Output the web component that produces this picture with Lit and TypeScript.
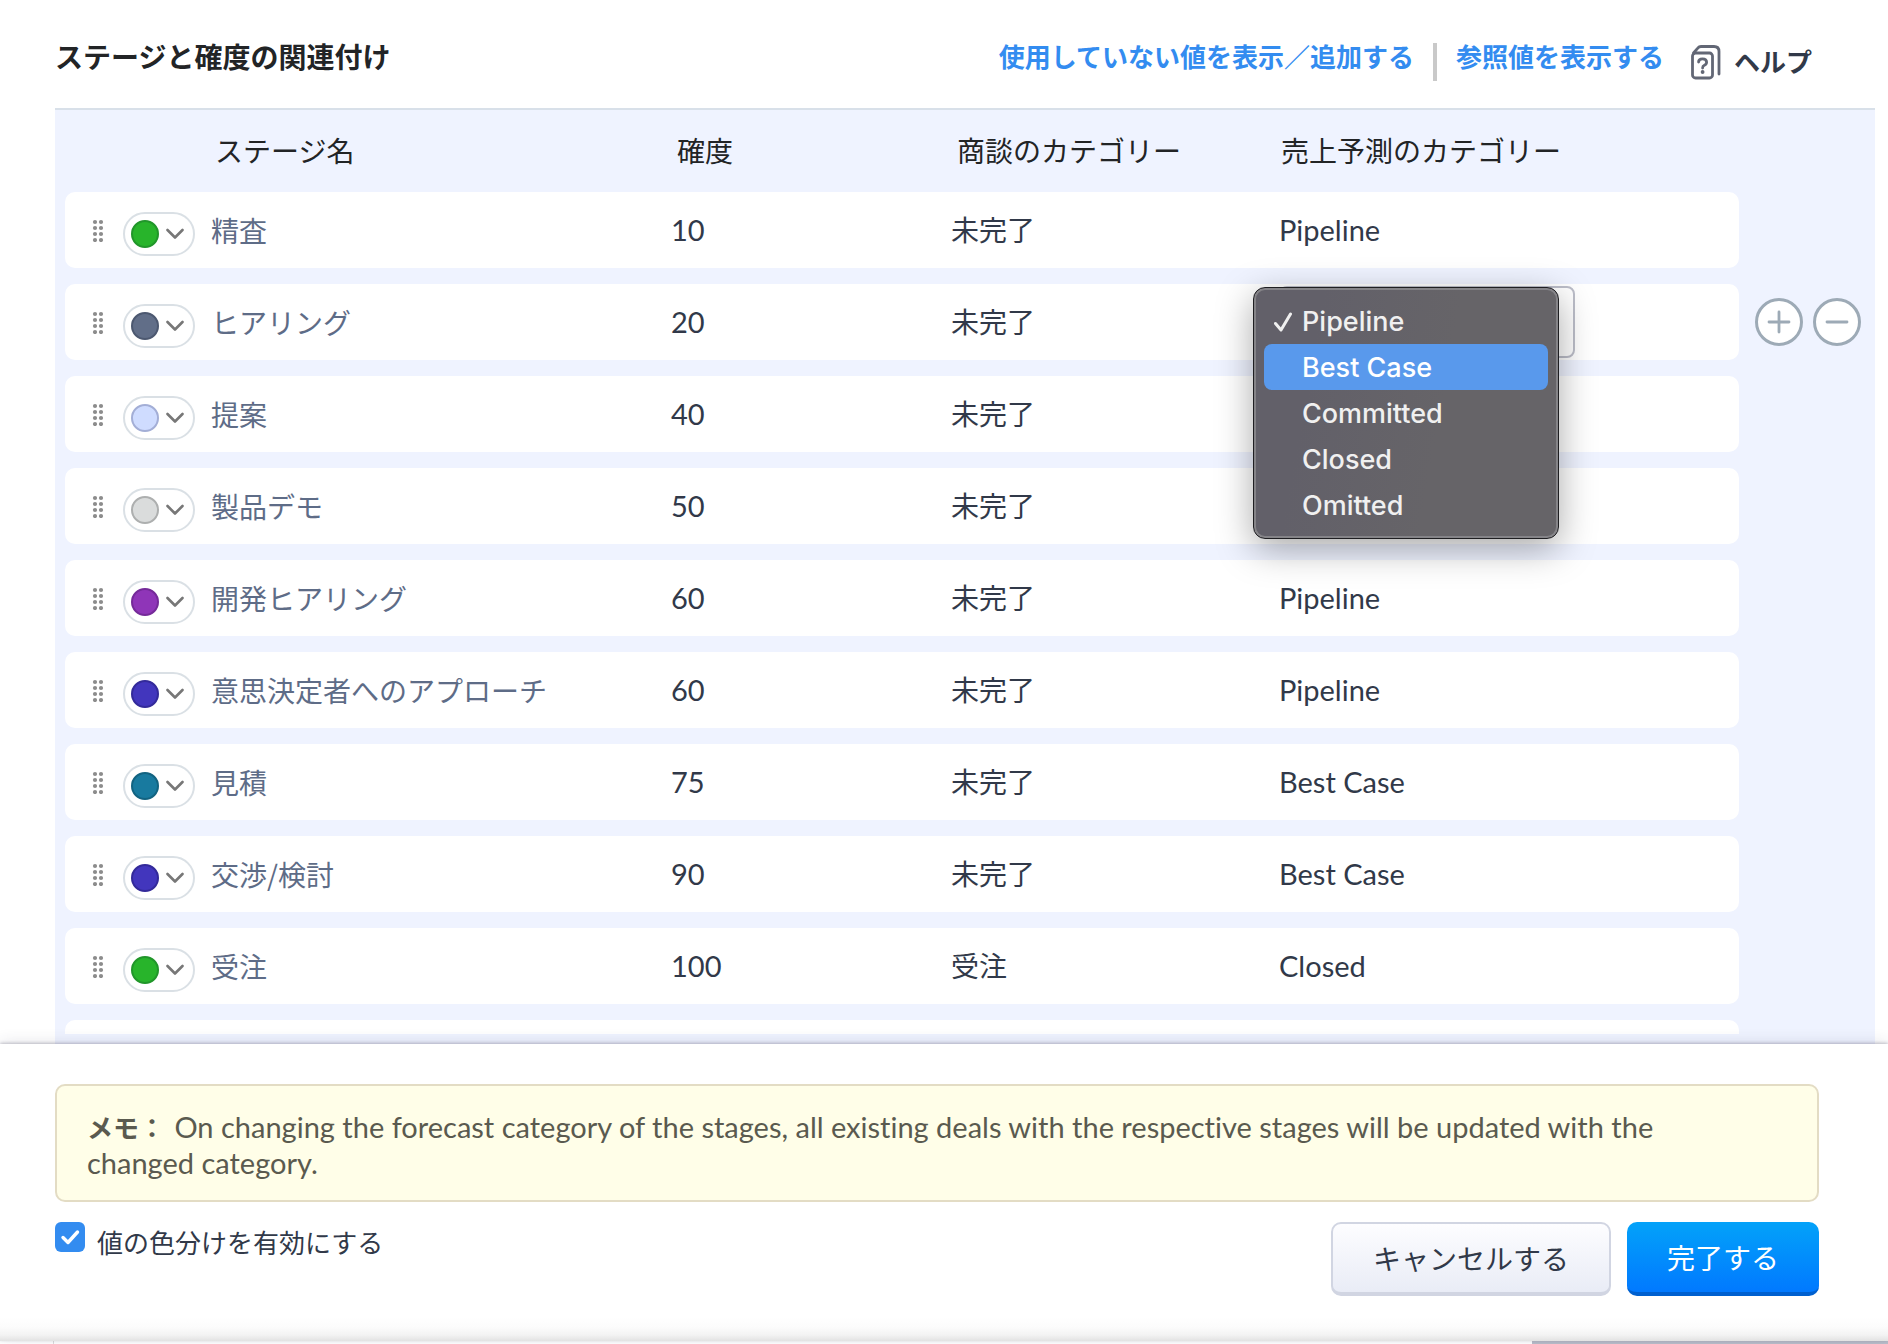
import { LitElement, html, css, svg, nothing } from "lit";
import { customElement, property, state } from "lit/decorators.js";
import { classMap } from "lit/directives/class-map.js";
import { styleMap } from "lit/directives/style-map.js";

interface Stage {
  name: string;
  probability: number;
  category: string;
  forecast: string;
  color: string;
  ring: string;
}

const STAGES: Stage[] = [
  { name: "精査", probability: 10, category: "未完了", forecast: "Pipeline", color: "#28b42b", ring: "#21962a" },
  { name: "ヒアリング", probability: 20, category: "未完了", forecast: "Pipeline", color: "#616e88", ring: "#4c5870" },
  { name: "提案", probability: 40, category: "未完了", forecast: "", color: "#cfdcff", ring: "#a3aed6" },
  { name: "製品デモ", probability: 50, category: "未完了", forecast: "", color: "#dadcdc", ring: "#adafaf" },
  { name: "開発ヒアリング", probability: 60, category: "未完了", forecast: "Pipeline", color: "#8f35b8", ring: "#752a99" },
  { name: "意思決定者へのアプローチ", probability: 60, category: "未完了", forecast: "Pipeline", color: "#4236bd", ring: "#332a9a" },
  { name: "見積", probability: 75, category: "未完了", forecast: "Best Case", color: "#187a9f", ring: "#126381" },
  { name: "交渉/検討", probability: 90, category: "未完了", forecast: "Best Case", color: "#4236bd", ring: "#332a9a" },
  { name: "受注", probability: 100, category: "受注", forecast: "Closed", color: "#28b42b", ring: "#21962a" },
];

const FORECASTS = ["Pipeline", "Best Case", "Committed", "Closed", "Omitted"];

@customElement("forecast-picker")
class ForecastPicker extends LitElement {
  @property() value = "Pipeline";
  @state() private active = "Best Case";

  static styles = css`
    :host {
      display: block;
    }
    .field {
      display: block;
      box-sizing: border-box;
      width: 296px;
      height: 72px;
      padding: 0 20px;
      border: 2px solid #bcbec9;
      border-radius: 8px;
      background: #fff;
      color: #313949;
      font: inherit;
      appearance: none;
    }
    .menu {
      position: absolute;
      z-index: 2;
      top: 3px;
      left: -26px;
      box-sizing: border-box;
      width: 306px;
      padding: 10px;
      border: 1px solid #1f1f22;
      border-radius: 12px;
      background: linear-gradient(100deg, #626069 20%, #666468 60%);
      box-shadow: inset 0 0 0 2px #858488, 0 10px 36px rgba(0, 0, 0, 0.34);
      color: #f0f0f0;
      font: 500 27px/46px Inter, "Liberation Sans", sans-serif;
    }
    .option {
      display: flex;
      align-items: center;
      box-sizing: border-box;
      height: 46px;
      padding: 2px 0 0 10px;
      border-radius: 8px;
    }
    .option.active {
      background: #5999ec;
      color: #fff;
    }
    .tick {
      width: 28px;
      height: 24px;
      flex: none;
    }
  `;

  render() {
    return html`
      <select class="field" aria-label="売上予測のカテゴリー" .value=${this.value}>
        ${FORECASTS.map((f) => html`<option ?selected=${f === this.value}>${f}</option>`)}
      </select>
      <div class="menu" role="listbox">
        ${FORECASTS.map(
          (f) => html`
            <div
              class=${classMap({ option: true, active: f === this.active })}
              role="option"
              aria-selected=${f === this.value}
              @mouseenter=${() => (this.active = f)}
            >
              <svg class="tick" viewBox="0 0 28 24" aria-hidden="true">
                ${f === this.value
                  ? svg`<path d="M1.5 13.5 L7 20 L16.5 4" fill="none" stroke="#f0f0f0" stroke-width="3" stroke-linecap="round" stroke-linejoin="round"/>`
                  : nothing}
              </svg>
              ${f}
            </div>
          `
        )}
      </div>
    `;
  }
}

@customElement("app-root")
class AppRoot extends LitElement {
  @state() private editing = 1;
  @state() private colorCoding = true;

  static styles = css`
    :host {
      display: block;
      color: #313949;
      background: #fff;
      font: 400 28px/36px Lato, "Noto Sans CJK JP", sans-serif;
      font-variant-ligatures: none;
    }
    .page {
      display: flex;
      flex-direction: column;
      height: 100vh;
    }
    .top {
      display: flex;
      align-items: center;
      flex: none;
      height: 108px;
      box-sizing: border-box;
      padding: 16px 76px 0 55px;
    }
    .title {
      margin: 0;
      padding-bottom: 10px;
      color: #222426;
      font-size: 28px;
      font-weight: 700;
      line-height: 36px;
    }
    .tools {
      display: flex;
      align-items: center;
      margin-left: auto;
      font-size: 26px;
      font-weight: 700;
    }
    .link {
      padding-bottom: 10px;
      color: #338cf0;
      text-decoration: none;
    }
    .divider {
      width: 4px;
      height: 38px;
      margin: 0 19px;
      background: #c9c9c9;
    }
    .help {
      display: flex;
      align-items: center;
      gap: 12px;
      margin-left: 26px;
      color: #313949;
      text-decoration: none;
    }
    .help-icon {
      width: 32px;
      height: 36px;
    }
    .board {
      display: flex;
      flex-direction: column;
      flex: 1;
      min-height: 0;
      margin: 0 13px 0 55px;
      padding: 0 0 10px 10px;
      border-top: 2px solid #d8e0e9;
      background: #eff3ff;
    }
    .scroll {
      flex: 1;
      min-height: 0;
      overflow: hidden;
    }
    .stages {
      width: 100%;
      table-layout: fixed;
      border-collapse: separate;
      border-spacing: 0 16px;
    }
    .c-prob {
      width: 280px;
    }
    .c-cat {
      width: 328px;
    }
    .c-forecast {
      width: 460px;
    }
    .c-actions {
      width: 136px;
    }
    th {
      height: 50px;
      padding: 0 0 0 6px;
      color: #222426;
      font-weight: 400;
      text-align: left;
    }
    .h-stage {
      padding-left: 150px;
    }
    .h-forecast {
      padding-left: 2px;
    }
    td {
      position: relative;
      height: 76px;
      padding: 0;
      background: #fff;
    }
    .latin {
      font-size: 29px;
    }
    .first {
      border-radius: 10px 0 0 10px;
    }
    .last {
      border-radius: 0 10px 10px 0;
    }
    .actions {
      background: none;
    }
    .stage {
      display: flex;
      align-items: center;
      padding-left: 27px;
      color: #5e6c87;
      font-family: "Noto Sans CJK JP", sans-serif;
    }
    .grip {
      width: 12px;
      height: 24px;
      fill: #8c8c8c;
    }
    .swatch {
      display: flex;
      align-items: center;
      gap: 7px;
      box-sizing: border-box;
      width: 72px;
      height: 44px;
      margin: 8px 16px 0 19px;
      padding: 0 6px;
      border: 2px solid #dae0e5;
      border-radius: 22px;
      background: #fff;
    }
    .dot {
      box-sizing: border-box;
      width: 28px;
      height: 28px;
      flex: none;
      border: 2px solid;
      border-radius: 50%;
    }
    .chevron {
      width: 18px;
      height: 12px;
      flex: none;
    }
    .pair {
      display: flex;
      gap: 10px;
      padding-left: 16px;
    }
    .round {
      display: flex;
      align-items: center;
      justify-content: center;
      box-sizing: border-box;
      width: 48px;
      height: 48px;
      padding: 0;
      border: 3px solid #9daab6;
      border-radius: 50%;
      background: #fff;
    }
    .sign {
      width: 24px;
      height: 24px;
      flex: none;
    }
    .footer {
      position: relative;
      flex: none;
      box-sizing: border-box;
      padding: 40px 69px 45px 55px;
      background: linear-gradient(to top, #e2e2e2 0, #f3f3f3 6px, #fcfcfc 14px, #fff 24px);
      box-shadow: 0 -1px 3px rgba(50, 50, 80, 0.28), 0 -2px 14px rgba(50, 50, 80, 0.12);
    }
    .note {
      margin: 0 0 20px;
      padding: 23px 60px 19px 30px;
      border: 2px solid #e3dcc4;
      border-radius: 10px;
      background: #fffee8;
      color: #5a5a4f;
      font-size: 29px;
    }
    .note-label {
      margin-right: 2px;
      font-size: 26px;
      line-height: 28px;
    }
    .bar {
      display: flex;
      align-items: flex-start;
      gap: 16px;
    }
    .toggle {
      display: flex;
      gap: 12px;
      margin-right: auto;
      font-size: 26px;
    }
    .toggle-text {
      padding-top: 3px;
    }
    .box {
      display: grid;
      align-content: start;
    }
    .check,
    .check-mark {
      grid-area: 1 / 1;
      width: 30px;
      height: 30px;
      margin: 0;
    }
    .check {
      border: 2px solid #b4bcc8;
      border-radius: 6px;
      appearance: none;
    }
    .check:checked {
      border: none;
      background: #338cf0;
    }
    .check-mark {
      pointer-events: none;
    }
    .btn {
      box-sizing: border-box;
      height: 74px;
      padding: 2px 40px 0;
      border-radius: 10px;
      font: inherit;
    }
    .cancel {
      border: 2px solid #d1d5e2;
      border-bottom-width: 4px;
      background: linear-gradient(#fdfdff, #e9ecf6);
      color: #313949;
    }
    .done {
      border: none;
      border-bottom: 4px solid #0060cf;
      background: linear-gradient(#03a2f9, #0179ff);
      color: #fff;
    }
    .behind {
      display: flex;
      justify-content: flex-end;
      flex: none;
      height: 3px;
      margin-left: 53px;
      border-left: 1px solid #dcdcdc;
    }
    .thumb {
      width: 356px;
      background: #b9bdc9;
    }
  `;

  private renderSwatch(s: Stage) {
    return html`
      <button class="swatch" aria-label=${`${s.name}の色`}>
        <span class="dot" style=${styleMap({ background: s.color, borderColor: s.ring })}></span>
        <svg class="chevron" viewBox="0 0 18 12" aria-hidden="true">
          <path d="M1.5 2 L9 9.5 L16.5 2" fill="none" stroke="#777" stroke-width="2.6" stroke-linecap="round" stroke-linejoin="round" />
        </svg>
      </button>
    `;
  }

  private renderActions() {
    return html`
      <div class="pair">
        <button class="round" aria-label="追加">
          <svg class="sign" viewBox="0 0 24 24"><path d="M2 12H22M12 2V22" stroke="#9daab6" stroke-width="2.8" stroke-linecap="round" /></svg>
        </button>
        <button class="round" aria-label="削除">
          <svg class="sign" viewBox="0 0 24 24"><path d="M2 12H22" stroke="#9daab6" stroke-width="2.8" stroke-linecap="round" /></svg>
        </button>
      </div>
    `;
  }

  private renderRow(s: Stage, i: number) {
    const editing = i === this.editing;
    return html`
      <tr>
        <td class="first">
          <div class="stage">
            <svg class="grip" viewBox="0 0 12 24" aria-hidden="true">
              ${[4, 10, 16, 22].map((y) => svg`<circle cx="3" cy=${y} r="2.1"/><circle cx="9" cy=${y} r="2.1"/>`)}
            </svg>
            ${this.renderSwatch(s)}
            <span>${s.name}</span>
          </div>
        </td>
        <td class="latin">${s.probability}</td>
        <td>${s.category}</td>
        <td class="last latin">
          ${editing ? html`<forecast-picker .value=${s.forecast}></forecast-picker>` : s.forecast}
        </td>
        <td class="actions">${editing ? this.renderActions() : nothing}</td>
      </tr>
    `;
  }

  render() {
    return html`
      <div class="page">
        <header class="top">
          <h1 class="title">ステージと確度の関連付け</h1>
          <nav class="tools">
            <a class="link" href="#unused">使用していない値を表示／追加する</a>
            <span class="divider"></span>
            <a class="link" href="#reference">参照値を表示する</a>
            <a class="help" href="#help">
              <svg class="help-icon" viewBox="0 0 32 36" fill="none" stroke="#626775" stroke-width="2.8" stroke-linecap="round" stroke-linejoin="round" aria-hidden="true">
                <rect x="2.5" y="9" width="20" height="25" rx="3" />
                <path d="M3.5 9 L8 3.8 Q9 2.5 11 2.5 H24 Q29 2.5 29 7.5 V30" />
                <path d="M8.6 18 Q8.6 14.8 12.5 14.8 Q16.6 14.8 16.6 18.2 Q16.6 20.2 14.4 21.2 Q12.6 22 12.6 24" />
                <circle cx="12.6" cy="28" r="1.9" fill="#626775" stroke="none" />
              </svg>
              ヘルプ
            </a>
          </nav>
        </header>

        <main class="board">
          <div class="scroll">
            <table class="stages">
              <colgroup>
                <col />
                <col class="c-prob" />
                <col class="c-cat" />
                <col class="c-forecast" />
                <col class="c-actions" />
              </colgroup>
              <thead>
                <tr>
                  <th class="h-stage">ステージ名</th>
                  <th>確度</th>
                  <th>商談のカテゴリー</th>
                  <th class="h-forecast">売上予測のカテゴリー</th>
                  <th></th>
                </tr>
              </thead>
              <tbody>
                ${STAGES.map((s, i) => this.renderRow(s, i))}
                <tr>
                  <td class="first"></td>
                  <td></td>
                  <td></td>
                  <td class="last"></td>
                  <td class="actions"></td>
                </tr>
              </tbody>
            </table>
          </div>
        </main>

        <footer class="footer">
          <p class="note">
            <strong class="note-label">メモ：</strong>
            On changing the forecast category of the stages, all existing deals with the respective stages will be updated with the changed category.
          </p>
          <div class="bar">
            <label class="toggle">
              <span class="box">
                <input
                  class="check"
                  type="checkbox"
                  .checked=${this.colorCoding}
                  @change=${(e: Event) => (this.colorCoding = (e.target as HTMLInputElement).checked)}
                />
                <svg class="check-mark" viewBox="0 0 30 30" aria-hidden="true">
                  ${this.colorCoding
                    ? svg`<path d="M8 15.5 L13 20.5 L22.5 10" fill="none" stroke="#fff" stroke-width="3.4" stroke-linecap="round" stroke-linejoin="round"/>`
                    : nothing}
                </svg>
              </span>
              <span class="toggle-text">値の色分けを有効にする</span>
            </label>
            <button class="btn cancel">キャンセルする</button>
            <button class="btn done">完了する</button>
          </div>
        </footer>
        <div class="behind"><span class="thumb"></span></div>
      </div>
    `;
  }
}
